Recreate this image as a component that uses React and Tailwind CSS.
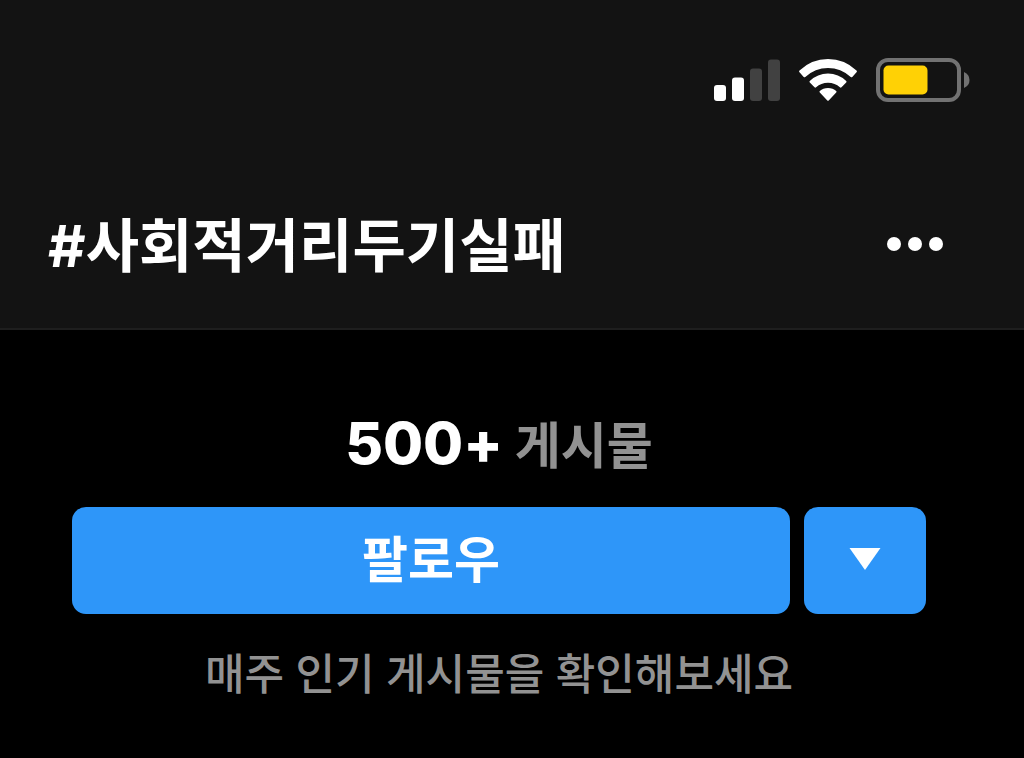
import React, { useState } from "react";

function SignalIcon() {
    return (
        <svg width="66" height="42" viewBox="0 0 66 42" aria-label="Signal">
            <rect x="0" y="26" width="12" height="16" rx="3" fill="#fff" />
            <rect x="18" y="18.500" width="12" height="23.500" rx="3" fill="#fff" />
            <rect x="36" y="9.500" width="12" height="32.500" rx="3" fill="#414141" />
            <rect x="54" y="0.500" width="12" height="41.500" rx="3" fill="#414141" />
        </svg>
    );
}

function WifiIcon() {
    return (
        <svg width="58" height="43" viewBox="0 0 58 43" fill="#fff" aria-label="Wi-Fi">
            <path d="M0.5 11.500 Q12.500 0 29 0 Q45.500 0 57.500 11.500 Q58.300 12.500 57.500 13.300 L53.300 18 Q52.500 18.700 51.700 18 Q42 9 29 9 Q16 9 6.300 18 Q5.500 18.700 4.700 18 L0.500 13.300 Q-0.300 12.500 0.500 11.500 Z" />
            <path d="M10.800 22 Q18.500 14.500 29 14.500 Q39.500 14.500 47.200 22 Q48 22.800 47.200 23.600 L42.500 28.300 Q41.700 29 40.900 28.300 Q36 23.700 29 23.700 Q22 23.700 17.100 28.300 Q16.300 29 15.500 28.300 L10.800 23.600 Q10 22.800 10.800 22 Z" />
            <path d="M20.800 32 Q24 29 29 29 Q34 29 37.200 32 Q38 32.800 37.200 33.600 L29.700 41.500 Q29 42.200 28.300 41.500 L20.800 33.600 Q20 32.800 20.800 32 Z" />
        </svg>
    );
}

function BatteryIcon() {
    return (
        <svg width="94" height="44" viewBox="0 0 94 44" aria-label="Battery">
            <rect x="2" y="2" width="81" height="40" rx="10" fill="none" stroke="#727272" strokeWidth="4" />
            <rect x="7.500" y="7.500" width="44" height="29" rx="5" fill="#ffd105" />
            <path d="M88 14 Q93.500 16.500 93.500 22 Q93.500 27.500 88 30 Z" fill="#727272" />
        </svg>
    );
}

function FollowBar() {
    const [following, setFollowing] = useState(false);

    return (
        <div className="flex gap-[14px] mt-[25px]">
            <button
                onClick={() => setFollowing(!following)}
                className="flex-1 h-[107px] pb-0.5 rounded-[14px] bg-[#2e96f9] text-white text-[50px] leading-[72px] font-bold"
            >
                {following ? "팔로잉" : "팔로우"}
            </button>
            <button
                aria-label="추천"
                className="w-[122px] h-[107px] pb-1 rounded-[14px] bg-[#2e96f9] flex items-center justify-center"
            >
                <svg width="32" height="22" viewBox="0 0 32 22" fill="#fff">
                    <path d="M0.500 0 H31.500 L16 22 Z" />
                </svg>
            </button>
        </div>
    );
}

export default function App() {
    return (
        <div className="min-h-screen bg-black font-['Inter','Noto_Sans_CJK_KR',sans-serif]">
            <header className="bg-[#131313] border-b-2 border-[#1e1e1e] pt-[58px] pb-10">
                <div className="flex items-center justify-end gap-[19px] pr-[54px]">
                    <SignalIcon />
                    <WifiIcon />
                    <BatteryIcon />
                </div>

                <div className="flex items-center justify-between pl-12 pr-20 mt-[102px]">
                    <h1 className="text-white text-[58px] leading-[84px] font-bold">
                        #사회적거리두기실패
                    </h1>
                    <button aria-label="더 보기" className="pt-3 pb-4">
                        <svg width="58" height="16" viewBox="0 0 58 16" fill="#fff">
                            <circle cx="8" cy="8" r="7" />
                            <circle cx="29" cy="8" r="7" />
                            <circle cx="50" cy="8" r="7" />
                        </svg>
                    </button>
                </div>
            </header>

            <main className="pl-[72px] pr-[98px] pt-[77px] text-center">
                <p className="text-[50px] leading-[72px] font-bold text-[#929292]">
                    <span className="text-[58px] font-extrabold text-white">500+</span> 게시물
                </p>
                <FollowBar />
                <p className="mt-7 text-[43px] leading-[64px] font-medium text-[#929292]">
                    매주 인기 게시물을 확인해보세요
                </p>
            </main>
        </div>
    );
}
